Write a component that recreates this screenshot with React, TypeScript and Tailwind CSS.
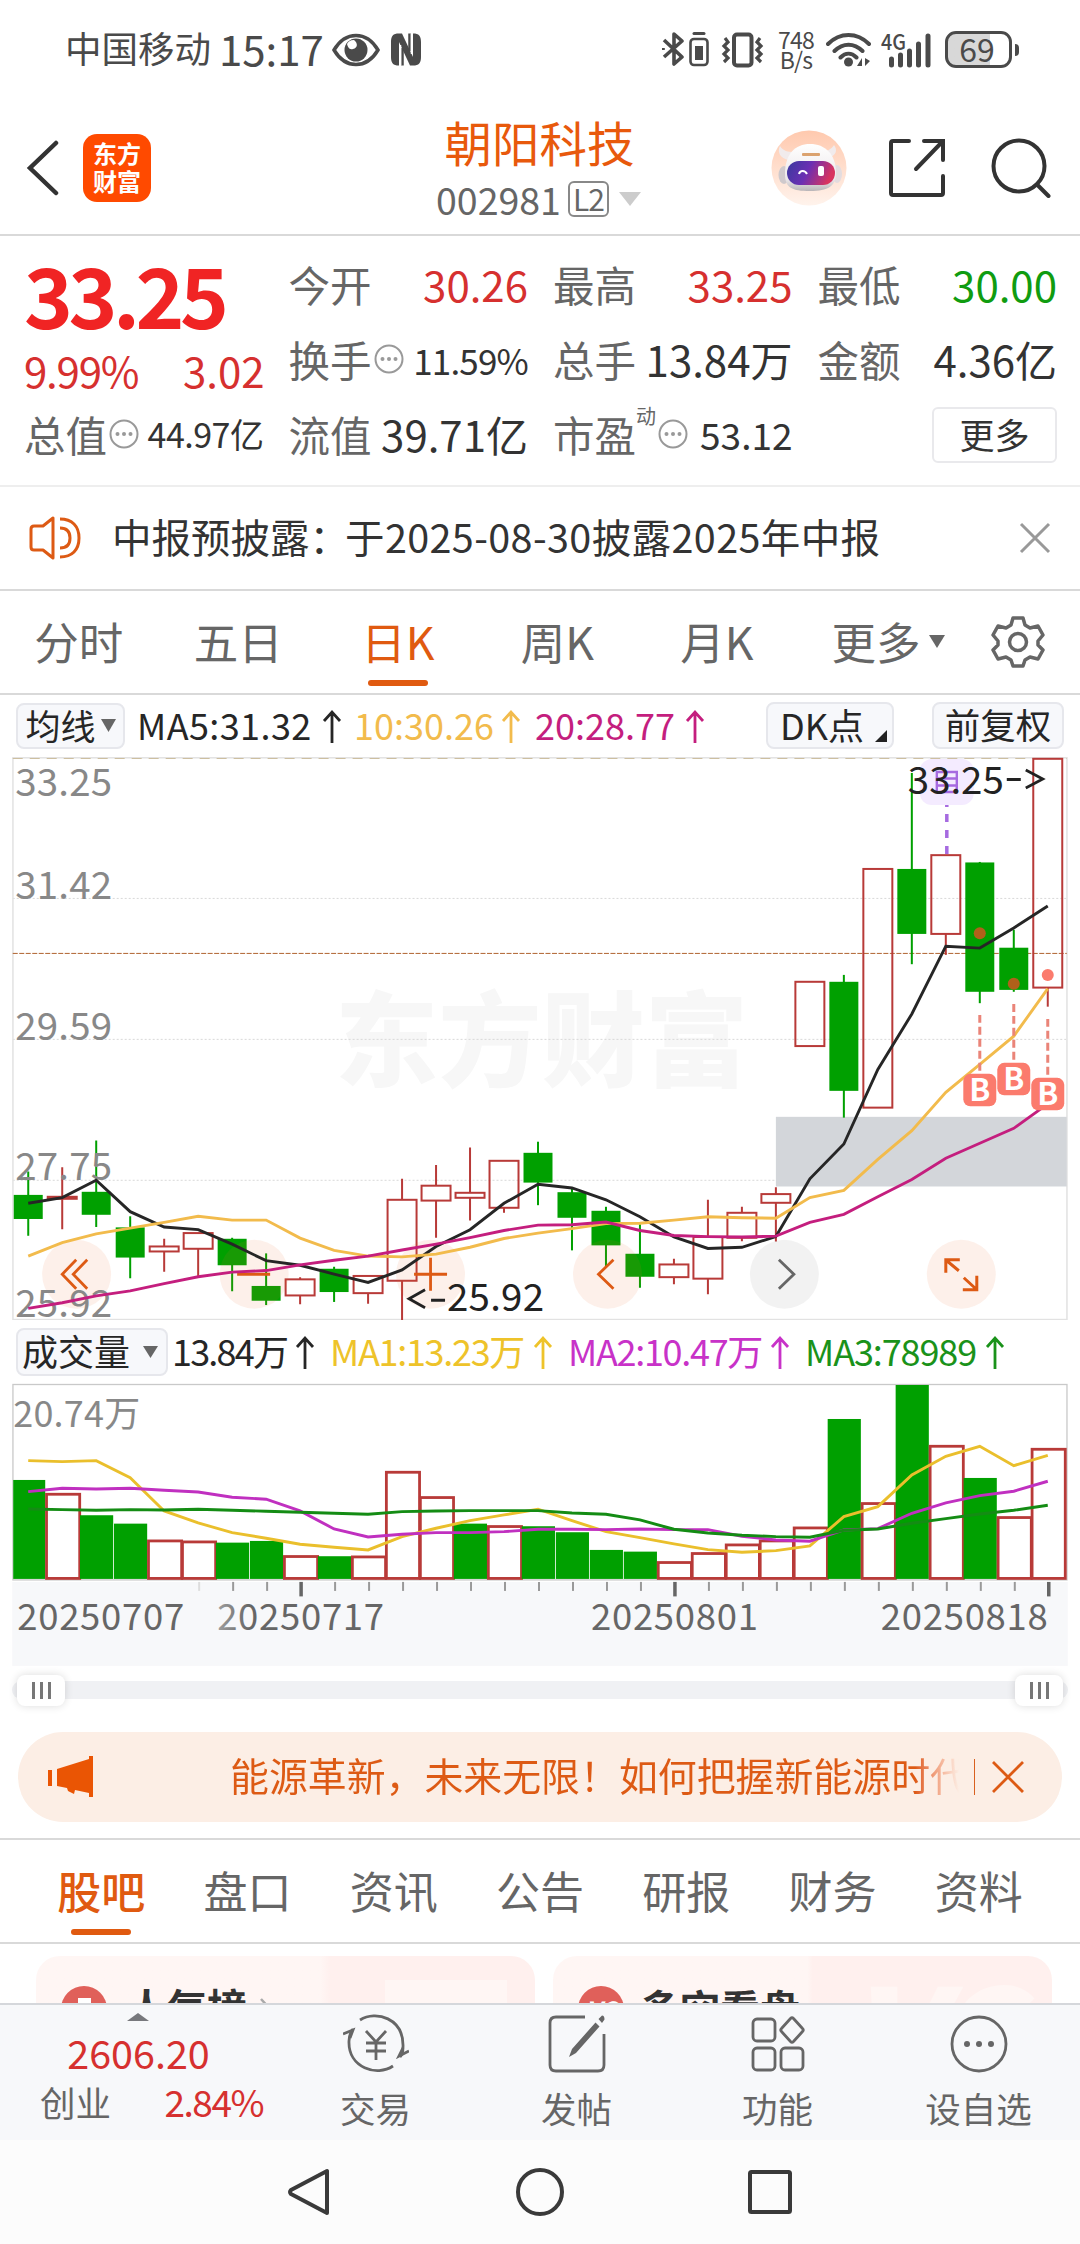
import { ReactNode } from "react";

type Candle = {
  up: boolean;
  high: number;
  top: number;
  bottom: number;
  low: number;
};

// [up, high, top, bottom, low] in chart pixels
const candleRows: [number, number, number, number, number][] = [
  [0, 1171.7, 1195.1, 1219.2, 1236],
  [1, 1167.5, 1197, 1199, 1229.5],
  [0, 1140.7, 1192, 1215, 1227.2],
  [0, 1216.5, 1227.6, 1257.8, 1278.5],
  [1, 1239, 1246.7, 1251.7, 1272],
  [1, 1233.3, 1233.3, 1249, 1276.2],
  [0, 1238, 1239, 1265.5, 1291.5],
  [0, 1253.6, 1286.2, 1301, 1305.3],
  [1, 1277.4, 1279.6, 1295.7, 1304.5],
  [0, 1267, 1269, 1292.3, 1302.2],
  [1, 1276.2, 1276.2, 1293.4, 1304],
  [1, 1179, 1200, 1281, 1320.6],
  [1, 1165.2, 1185.9, 1200.8, 1238],
  [1, 1147.6, 1193, 1198, 1220.7],
  [1, 1161, 1161, 1208, 1213],
  [0, 1141.9, 1153, 1182.8, 1205.4],
  [0, 1189, 1192.4, 1218, 1250.6],
  [0, 1207, 1211, 1245.6, 1266.6],
  [0, 1224.5, 1254, 1277, 1288],
  [1, 1259, 1264.7, 1277.4, 1284.6],
  [1, 1200, 1237.2, 1278.9, 1294.6],
  [1, 1207, 1213, 1238, 1241.4],
  [1, 1187.4, 1194.3, 1203, 1241.8],
  [1, 981.9, 981.9, 1046.2, 1046.2],
  [0, 975, 981.9, 1091, 1117.8],
  [1, 869, 869, 1107.8, 1107.8],
  [0, 773, 869, 934, 964.3],
  [1, 855.2, 855.2, 934, 955],
  [0, 862, 862.5, 991.9, 1003.3],
  [0, 929.9, 947.8, 990, 991.9],
  [1, 758.8, 758.8, 987.7, 1006.8],
];

const candles: Candle[] = candleRows.map(([up, high, top, bottom, low]) => ({
  up: up === 1,
  high,
  top,
  bottom,
  low,
}));

const ma5 = [
  1203.5, 1197.8, 1180.5, 1211.9, 1227.2, 1229.9, 1244.4, 1260.9, 1265.5, 1274.3, 1282.7, 1270.1, 1246.7, 1229.9,
  1203.5, 1184.4, 1188.2, 1200, 1216.9, 1237.2, 1248.7, 1247.5, 1236.8, 1179, 1144.2, 1069.6, 1014.1, 946.3, 948.2,
  928, 906.1,
];
const ma10 = [
  1256.3, 1242.9, 1234.1, 1228.4, 1222.6, 1216.5, 1220.3, 1220.3, 1238.3, 1250.6, 1256.3, 1257.1, 1254.4, 1247.5,
  1238.7, 1233.4, 1228.8, 1223.8, 1223.4, 1220.3, 1216.9, 1218, 1218.4, 1197.8, 1190.5, 1159.5, 1130.8, 1092.5,
  1064.6, 1036.3, 988.8,
];
const ma20 = [
  1308.7, 1303, 1296.1, 1291.1, 1283.9, 1277, 1272.4, 1270.8, 1265.1, 1260.5, 1256.3, 1250.2, 1244.4, 1237.9,
  1230.7, 1225.3, 1224.9, 1222.3, 1230.7, 1235.7, 1236.8, 1237.2, 1236.4, 1222.6, 1214.6, 1197, 1179.8, 1158.4,
  1143.4, 1128.5, 1104,
];

// [up, top]
const volumes: [number, number][] = [
  [0, 1480], [1, 1493], [0, 1515.3], [0, 1523.7], [1, 1539.7], [1, 1540.7], [0, 1542.7], [0, 1541],
  [1, 1555.3], [0, 1556.3], [1, 1555.7], [1, 1471], [1, 1496.3], [0, 1523.7], [1, 1525.3], [0, 1526.3],
  [0, 1532.3], [0, 1550], [0, 1551.7], [1, 1561.3], [1, 1552.3], [1, 1543.7], [1, 1539.7], [1, 1526.7],
  [0, 1419], [1, 1502.3], [0, 1385], [1, 1445], [0, 1478], [1, 1516.3], [1, 1448],
];
const vma1 = [
  1460.7, 1461.7, 1460.7, 1477.7, 1511, 1523, 1532.7, 1538.3, 1544.3, 1547.3, 1550, 1536.7, 1528.3, 1520.7, 1515,
  1509.3, 1520.7, 1531.7, 1537.7, 1544, 1549.7, 1552.3, 1550.7, 1546, 1516.7, 1506.7, 1475, 1456.3, 1446.3, 1465.7,
  1455.3,
];
const vma2 = [
  1491.7, 1488.3, 1489, 1488.3, 1490.3, 1492, 1497.3, 1499.3, 1511, 1529, 1537, 1534.3, 1532.7, 1532.7, 1531.7,
  1529.3, 1529.3, 1529.7, 1529, 1529.7, 1529.7, 1536.3, 1540, 1541.3, 1530, 1528.7, 1513.3, 1503, 1495.7, 1491.3,
  1481.3,
];
const vma3 = [
  1509, 1509.7, 1510.3, 1509.7, 1510, 1509.3, 1510.3, 1511.3, 1512.3, 1513.3, 1514.3, 1511.7, 1511, 1510.7, 1510.7,
  1510.7, 1513, 1514.3, 1520, 1529.3, 1533, 1535.3, 1536.7, 1537.3, 1530.3, 1529, 1523.3, 1518.7, 1514, 1510.3,
  1505.3,
];

const cx = (i: number) => 28 + i * 34;
const toPoints = (ys: number[]) => ys.map((y, i) => `${cx(i)},${y}`).join(" ");

function StatusBar() {
  return (
    <div className="flex h-[110px] items-center pb-[10px] pl-[65px] pr-[61px] text-[#4a4a4a]">
      <span className="-mt-[3px] text-[36.5px] leading-none">中国移动</span>
      <span className="-mt-[3px] ml-[8px] text-[42px] leading-none">15:17</span>
      <svg className="ml-[8px]" width="48" height="34" viewBox="0 0 48 34" fill="none">
        <path d="M2 17C8 7 15 2.500 24 2.500S40 7 46 17C40 27 33 31.500 24 31.500S8 27 2 17Z" stroke="currentColor" strokeWidth="3.500" />
        <circle cx="24" cy="17" r="11.500" fill="currentColor" />
        <path d="M22 7c4 3 4 8-1 9-4 1-5-2-6-5 1-2 3-4 7-4Z" fill="#fff" />
      </svg>
      <svg className="ml-[10px]" width="32" height="33" viewBox="0 0 32 33" fill="none">
        <path d="M9 0.500C3 0.500 1 3 1 9v15c0 6 2 8.500 8 8.500ZM23 32.500c6 0 8-2.500 8-8.500V9c0-6-2-8.500-8-8.500Z" fill="currentColor" />
        <path d="M9 0.500h3L23 24v8.500h-3L9 9Z" fill="currentColor" />
        <path d="M12.500 15v17.500M19.500 0.500V18" stroke="currentColor" strokeWidth="2.500" />
        <path d="M10.500 12v20M21.500 1v20" stroke="#fff" strokeWidth="1.500" />
      </svg>
      <div className="ml-auto flex items-center">
        <svg width="48" height="38" viewBox="0 0 48 38" fill="none" stroke="currentColor">
          <path d="M2 9l18 17-8 7V3l8 7L2 26M1 17v2" strokeWidth="3.600" strokeLinejoin="round" />
          <path d="M32 2.500h10" strokeWidth="3" strokeLinecap="round" />
          <rect x="28.500" y="8" width="17" height="26" rx="3.500" strokeWidth="2.600" />
          <rect x="33" y="15" width="8" height="14" fill="currentColor" stroke="none" />
        </svg>
        <svg className="ml-[11px]" width="44" height="38" viewBox="0 0 44 38" fill="none" stroke="currentColor">
          <rect x="13" y="3.500" width="17.500" height="31" rx="3" strokeWidth="4" />
          <path d="M4 7l3 4-4 4 4 4-4 4 4 4-4 4M39 7l-3 4 4 4-4 4 4 4-4 4 4 4" strokeWidth="3.200" />
        </svg>
        <div className="-mt-[2px] ml-[12px] flex w-[38px] flex-col items-center text-[23px] leading-[20px] tracking-[-0.8px]">
          <span>748</span>
          <span>B/s</span>
        </div>
        <svg className="ml-[11px]" width="46" height="38" viewBox="0 0 46 38" fill="none" stroke="currentColor" strokeWidth="4">
          <path d="M2 13C14 1 31 1 43 13M8.500 20C17 11.500 28 11.500 36.500 20M14.500 26.500c5-5 11-5 16 0" strokeLinecap="round" />
          <circle cx="22.500" cy="31" r="4.500" fill="currentColor" stroke="none" />
          <path d="M36 27v8h-5ZM39 27v8l5-5Z" fill="currentColor" stroke="none" />
        </svg>
        <svg className="ml-[9px]" width="52" height="38" viewBox="0 0 52 38" fill="none">
          <text x="0" y="19" fontSize="22" fontWeight="500" textLength="25" lengthAdjust="spacingAndGlyphs" fill="currentColor">4G</text>
          <path d="M10.500 28v6M19.500 24v10M28.500 20v14M37.500 13v21M47 5v29" stroke="currentColor" strokeWidth="5" strokeLinecap="round" />
        </svg>
        <div className="ml-[12px] flex h-[37px] w-[67px] items-center justify-center rounded-[11px] border-[3px] border-[#4a4a4a] bg-linear-to-r from-[#d8d8d8] from-69% to-white to-69% pb-[3px] pr-[3px] text-[32px] leading-[31px]">
          69
        </div>
        <div className="ml-[3px] h-3 w-1 rounded-r-sm bg-[#4a4a4a]" />
      </div>
    </div>
  );
}

function RobotIcon() {
  return (
    <svg width="76" height="76" viewBox="0 0 76 76">
      <defs>
        <linearGradient id="halo" x1="0" y1="0" x2="0" y2="1">
          <stop offset="0" stopColor="#ffc9ae" />
          <stop offset="1" stopColor="#fff3ec" />
        </linearGradient>
        <linearGradient id="visor" x1="0" y1="0" x2="1" y2="0.25">
          <stop offset="0" stopColor="#3a3a9e" />
          <stop offset="0.5" stopColor="#6b2fb3" />
          <stop offset="1" stopColor="#d8335f" />
        </linearGradient>
        <linearGradient id="shell" x1="0" y1="0" x2="0" y2="1">
          <stop offset="0" stopColor="#ffffff" />
          <stop offset="0.75" stopColor="#ece8ea" />
          <stop offset="1" stopColor="#b9b5b8" />
        </linearGradient>
      </defs>
      <circle cx="38" cy="38" r="37.500" fill="url(#halo)" />
      <path d="M17 30C9 28 6 22 9 16c3 5 8 6 14 6ZM57 28c8-2 10-8 6-13-3 5-7 6-12 6Z" fill="#f1ebec" />
      <ellipse cx="13" cy="45" rx="5.500" ry="9" fill="#cfc9cc" />
      <ellipse cx="66" cy="44" rx="5" ry="9" fill="#e3dcdf" />
      <path d="M14 44C14 24 24 14 39 14s26 10 26 29c0 13-8 18-26 18S14 58 14 44Z" fill="url(#shell)" />
      <rect x="16" y="31" width="48" height="24" rx="12" fill="url(#visor)" />
      <rect x="31" y="23" width="18" height="3" rx="1" fill="#dba26f" />
      <path d="M28 44c1-4 6-4 8 0" stroke="#fff" strokeWidth="2" fill="none" />
      <rect x="47" y="36" width="6" height="10" rx="2" fill="#fff" />
    </svg>
  );
}

function Header() {
  return (
    <header className="flex h-[126px] items-center border-b-2 border-[#d9d9d9] pl-[26px] pr-[29px] text-[#333]">
      <svg width="33" height="56" viewBox="0 0 33 56" fill="none" className="-mt-[8px]">
        <path d="M30 3L4 28l26 25" stroke="currentColor" strokeWidth="4.500" strokeLinecap="round" />
      </svg>
      <div className="-mt-[8px] ml-[24px] flex h-[68px] w-[68px] flex-col items-center justify-center rounded-[14px] bg-[#ff4a00] pb-[2px] text-[24px] font-bold leading-[28px] text-white">
        <span>东方</span>
        <span>财富</span>
      </div>
      <div className="-mt-[6px] flex flex-1 flex-col items-center pl-[157px]">
        <h1 className="whitespace-nowrap text-[47.5px] font-normal leading-[56px] text-[#e8590c]">朝阳科技</h1>
        <div className="mt-1 flex items-center pr-[2px] text-[#666]">
          <span className="text-[37.5px] leading-[50px]">002981</span>
          <span className="ml-[7px] flex h-9 w-[41px] items-center justify-center rounded-md border-2 border-[#888] pb-[2px] text-[30px] leading-none tracking-[-1px]">
            L2
          </span>
          <svg className="ml-[10px]" width="22" height="14" viewBox="0 0 22 14">
            <path d="M0 0h22L11 14Z" fill="#ccc" />
          </svg>
        </div>
      </div>
      <div className="-mt-[8px] flex items-center">
        <RobotIcon />
        <svg className="ml-[41px]" width="58" height="60" viewBox="0 0 58 60" fill="none" stroke="currentColor" strokeWidth="4" strokeLinecap="round">
          <path d="M21 3H5c-1.500 0-2 .5-2 2v50c0 1.500.5 2 2 2h48c1.500 0 2-.5 2-2V38M36 3h19v19M55 3L28 31" />
        </svg>
        <svg className="ml-[45px]" width="60" height="60" viewBox="0 0 60 60" fill="none" stroke="currentColor" strokeWidth="4" strokeLinecap="round">
          <circle cx="28" cy="28" r="25.500" />
          <path d="M46.500 47l11 11" />
        </svg>
      </div>
    </header>
  );
}

function Dots() {
  return (
    <svg className="ml-[2px]" width="30" height="30" viewBox="0 0 30 30" fill="#999">
      <circle cx="15" cy="15" r="13.500" fill="none" stroke="#999" strokeWidth="2" />
      <circle cx="8.500" cy="15" r="2" />
      <circle cx="15" cy="15" r="2" />
      <circle cx="21.500" cy="15" r="2" />
    </svg>
  );
}

function Stat({ label, children }: { label: ReactNode; children?: ReactNode }) {
  return (
    <div className="flex h-[75px] items-center justify-between text-[42px] leading-none text-[#333]">
      <span className="flex items-center text-[41.5px] text-[#666]">{label}</span>
      {children}
    </div>
  );
}

function Quote() {
  return (
    <section className="grid h-[251px] grid-cols-4 gap-x-[25px] border-b-2 border-[#eee] pl-[24px] pr-[23px] pt-[11px]">
      <div className="flex flex-col">
        <div className="flex h-[96px] items-center pb-[3px] text-[83px] font-bold leading-none tracking-[-4.500px] text-[#f02424]">33.25</div>
        <div className="flex h-[54px] items-center justify-between text-[42px] leading-none text-[#d6302f]">
          <span className="tracking-[-1.200px]">9.99%</span>
          <span className="-mr-[1px]">3.02</span>
        </div>
        <Stat label={<>总值<Dots /></>}>
          <span className="text-[34px] tracking-[-0.5px]">44.97亿</span>
        </Stat>
      </div>
      <div>
        <Stat label="今开">
          <span className="text-[#d6302f]">30.26</span>
        </Stat>
        <Stat label={<>换手<Dots /></>}>
          <span className="text-[35px] tracking-[-0.8px]">11.59%</span>
        </Stat>
        <Stat label="流值">
          <span>39.71亿</span>
        </Stat>
      </div>
      <div>
        <Stat label="最高">
          <span className="text-[#d6302f]">33.25</span>
        </Stat>
        <Stat label="总手">
          <span>13.84万</span>
        </Stat>
        <Stat
          label={
            <>
              市盈<sup className="-top-[18px] text-[20px] leading-none">动</sup>
              <Dots />
            </>
          }
        >
          <span className="text-[37px]">53.12</span>
        </Stat>
      </div>
      <div>
        <Stat label="最低">
          <span className="text-[#109c10]">30.00</span>
        </Stat>
        <Stat label="金额">
          <span>4.36亿</span>
        </Stat>
        <div className="flex h-[75px] items-center justify-end pt-[2px]">
          <button className="h-[56px] w-[125px] rounded-md border-2 border-[#e9e9ec] pb-[4px] text-[35px] leading-none text-[#333]">更多</button>
        </div>
      </div>
    </section>
  );
}

function Notice() {
  return (
    <section className="flex h-[104px] items-center border-b-2 border-[#d9d9d9] pl-[29px] pr-[29px]">
      <svg width="52" height="46" viewBox="0 0 52 46" fill="none" stroke="#dd5a14" strokeWidth="3">
        <path d="M24 3v40L14 35H5c-2 0-3-1-3-3V14c0-2 1-3 3-3h9Z" strokeLinejoin="round" />
        <path d="M31 13c7 0 10 4 10 10s-3 10-10 10M31 4c12 0 19 7 19 19s-7 19-19 19" />
      </svg>
      <p className="-mt-[5px] ml-[31px] text-[39.5px] leading-none text-[#333]">
        中报预披露：<span className="-ml-[4px] tracking-[0.4px]">于2025-08-30披露2025年中报</span>
      </p>
      <svg className="ml-auto" width="32" height="32" viewBox="0 0 32 32" stroke="#999" strokeWidth="3">
        <path d="M2 2l28 28M30 2L2 30" />
      </svg>
    </section>
  );
}

function PeriodTabs() {
  const tabs = ["分时", "五日", "日K", "周K", "月K"];
  return (
    <nav className="flex h-[104px] items-center border-b-2 border-[#d9d9d9] pr-[35px] text-[44.5px] leading-none text-[#666]">
      {tabs.map((tab) => (
        <div
          key={tab}
          className={
            tab === "日K"
              ? "relative flex h-full w-[159.500px] items-center justify-center pr-[2px] text-[#e05a10]"
              : "flex w-[159.500px] items-center justify-center pr-[2px]"
          }
        >
          {tab}
          {tab === "日K" && <span className="absolute bottom-[7px] h-[6px] w-[60px] rounded-full bg-[#e05a10]" />}
        </div>
      ))}
      <span className="ml-[34px]">更多</span>
      <svg className="ml-[8px]" width="16" height="13" viewBox="0 0 16 13">
        <path d="M0 0h16L8 13Z" fill="#666" />
      </svg>
      <svg className="ml-auto" width="54" height="54" viewBox="0 0 54 54" fill="none" stroke="#666" strokeWidth="3.500" strokeLinejoin="round">
        <path d="M22 3h10l2 7 5 3 8-2 5 9-5 6v4l5 5-5 9-8-2-5 3-2 6H22l-2-6-5-3-8 2-5-9 5-5v-4l-5-6 5-9 8 2 5-3Z" />
        <circle cx="27" cy="27" r="8.500" />
      </svg>
    </nav>
  );
}

function UpArrow({ className }: { className?: string }) {
  return (
    <svg className={className} width="20" height="34" viewBox="0 0 20 34" fill="none" stroke="currentColor" strokeWidth="2.800">
      <path d="M10 34V3M2 12l8-9 8 9" />
    </svg>
  );
}

function PriceHeader() {
  return (
    <div className="flex h-[62px] items-center px-4 text-[36px] leading-none text-[#262626]">
      <button className="flex h-[46px] w-[109px] items-center justify-center rounded-lg border-2 border-[#e6e7ec] bg-[#f7f8fb] leading-none">
        <span className="pb-[3px] text-[35px]">均线</span>
        <svg className="ml-[5px]" width="15" height="13" viewBox="0 0 15 13">
          <path d="M0 0h15L7.500 13Z" fill="#666" />
        </svg>
      </button>
      <span className="ml-[12px] w-[185px] pb-[4px] tracking-[0.4px]">MA5:31.32</span>
      <UpArrow />
      <span className="ml-[12px] flex items-center text-[#f2bb4c]">
        <span className="w-[147px] pb-[4px]">10:30.26</span>
        <UpArrow />
      </span>
      <span className="ml-[14px] flex items-center text-[#c41e7e]">
        <span className="w-[150px] pb-[4px]">20:28.77</span>
        <UpArrow />
      </span>
      <button className="relative ml-auto h-[47px] w-[128px] rounded-lg border-2 border-[#e6e7ec] bg-[#f7f8fb] pb-[4px] pr-[16px] leading-none">
        DK点
        <svg className="absolute bottom-[5px] right-[5px]" width="12" height="12" viewBox="0 0 12 12">
          <path d="M12 0v12H0Z" fill="#222" />
        </svg>
      </button>
      <button className="ml-[38px] h-[47px] w-[132px] rounded-lg border-2 border-[#e6e7ec] bg-[#f7f8fb] pb-[4px] text-[35.5px] leading-none">前复权</button>
    </div>
  );
}

function PriceChart() {
  const controls = [76.4, 254, 430.5, 607.5, 784.5, 961.5];
  const badges = [
    { i: 28, line: 1015, y: 1074 },
    { i: 29, line: 1004, y: 1063 },
    { i: 30, line: 1019, y: 1078 },
  ];
  return (
    <svg className="block" width="1080" height="564" viewBox="0 757 1080 564" fill="none">
      <text x="335" y="1079" fontSize="103" fontWeight="900" textLength="413" fill="#f7f7f7">东方财富</text>
      <path d="M12.500 898.500H1067M12.500 1039.500H1067M12.500 1180.500H1067" stroke="#d8d8d8" strokeDasharray="2 2" />
      <rect x="12.700" y="757.800" width="1054.500" height="562" stroke="#e2e2e2" strokeWidth="1.500" />
      <path d="M12.500 758.500H1067" stroke="#cdbf9f" strokeDasharray="10 7" />
      <path d="M12.500 953.500H1067" stroke="#b0622f" strokeDasharray="5 1.500" />
      <rect x="776" y="1117" width="291" height="69.700" fill="#d3d6da" />

      {candles.map((c, i) =>
        c.up ? (
          <g key={i} stroke="#b83a38" strokeWidth="2">
            <path d={`M${cx(i)} ${c.high}V${c.top}M${cx(i)} ${c.bottom}V${c.low}`} />
            <rect x={cx(i) - 14.5} y={c.top} width="29" height={c.bottom - c.top} />
          </g>
        ) : (
          <g key={i} fill="#00a000">
            <rect x={cx(i) - 1} y={c.high} width="2" height={c.low - c.high} />
            <rect x={cx(i) - 14.5} y={c.top} width="29" height={c.bottom - c.top} />
          </g>
        )
      )}

      {controls.map((x, i) => (
        <circle key={x} cx={x} cy="1274.500" r="34.500" fill={i === 4 ? "#000000" : "#f07030"} fillOpacity={i === 4 ? 0.05 : 0.1} />
      ))}

      <g fontSize="38.500" fill="#888">
        <text x="15" y="796" textLength="97">33.25</text>
        <text x="15" y="899" textLength="97">31.42</text>
        <text x="15" y="1040" textLength="97">29.59</text>
        <text x="15" y="1180" textLength="97">27.75</text>
        <text x="15" y="1317" textLength="97">25.92</text>
      </g>

      <path d="M76 1260l-14 14.500 14 14.500M87 1260l-14 14.500 14 14.500" stroke="#dd5a14" strokeWidth="2.800" />
      <path d="M237 1274.500h33M414 1274.500h33M430.500 1258v33" stroke="#dd5a14" strokeWidth="2.800" />
      <path d="M613.500 1260l-15 14.500 15 14.500" stroke="#dd5a14" strokeWidth="2.800" />
      <path d="M779 1260l15 14.500-15 14.500" stroke="#666" strokeWidth="2.800" />
      <path d="M946 1273v-13h14M947 1261l12 10M977 1276v14h-14M976 1289l-12-11" stroke="#dd5a14" strokeWidth="3" />

      <polyline points={toPoints(ma5)} stroke="#262626" strokeWidth="2.900" />
      <polyline points={toPoints(ma10)} stroke="#f2bb4c" strokeWidth="2.900" />
      <polyline points={toPoints(ma20)} stroke="#c41e7e" strokeWidth="2.900" />

      <rect x="920" y="759" width="54" height="46" rx="12" fill="#f4ebff" />
      <path d="M937 772h20v20h-20zM937 778.500h20M937 785.500h20" stroke="#a66ae0" strokeWidth="2.400" />
      <path d="M947 805v2M947 814v8M947 830v8M947 846v8" stroke="#a66ae0" strokeWidth="3.500" />

      <g fontSize="38.500" fill="#222">
        <text x="908" y="794" textLength="96">33.25</text>
        <text x="447" y="1311" textLength="97">25.92</text>
      </g>
      <path d="M1007 779.500h14M1026 770l17 9-17 9M425 1290l-16 9 16 9M431 1300.500h14" stroke="#222" strokeWidth="2.800" />

      {badges.map((b) => (
        <g key={b.i}>
          <path d={`M${cx(b.i)} ${b.line}V${b.y - 3}`} stroke="#ea8478" strokeWidth="3" strokeDasharray="8 4" />
          <rect x={cx(b.i) - 16.5} y={b.y} width="33" height="32.500" rx="7" fill="#fb7b6d" />
          <text x={cx(b.i)} y={b.y + 27} fontSize="31" fontWeight="700" textAnchor="middle" fill="#fff">B</text>
        </g>
      ))}
      <circle cx="980" cy="933.300" r="6" fill="#b0601a" />
      <circle cx="1014" cy="983.800" r="6" fill="#b0601a" />
      <circle cx="1048" cy="975" r="6" fill="#fb7b6d" />
    </svg>
  );
}

function VolumeHeader() {
  return (
    <div className="flex h-[63px] items-center pl-[16px] text-[36px] leading-none">
      <button className="flex h-[48px] w-[152px] items-center rounded-lg border-2 border-[#e6e7ec] bg-[#f7f8fb] pl-1 leading-none text-[#262626]">
        <span className="pb-[3px]">成交量</span>
        <svg className="ml-[13px]" width="15" height="12" viewBox="0 0 15 12">
          <path d="M0 0h15L7.500 12Z" fill="#666" />
        </svg>
      </button>
      <span className="ml-[4px] w-[123px] pb-[3px] tracking-[-1.800px] text-[#262626]">13.84万</span>
      <UpArrow className="text-[#262626]" />
      <span className="ml-[15px] flex items-center text-[#eec32a]">
        <span className="w-[203px] pb-[3px] tracking-[-1.300px]">MA1:13.23万</span>
        <UpArrow />
      </span>
      <span className="ml-[15px] flex items-center text-[#c832c8]">
        <span className="w-[202px] pb-[3px] tracking-[-1.300px]">MA2:10.47万</span>
        <UpArrow />
      </span>
      <span className="ml-[15px] flex items-center text-[#1a921a]">
        <span className="w-[180px] pb-[3px] tracking-[-1.100px]">MA3:78989</span>
        <UpArrow />
      </span>
    </div>
  );
}

function VolumeChart() {
  const ticks = Array.from({ length: 26 }, (_, k) => k + 5);
  return (
    <svg className="block" width="1080" height="284" viewBox="0 1383 1080 284" fill="none">
      <rect x="12" y="1582" width="1056" height="84" fill="#f7f8fa" />
      <rect x="12.700" y="1384.500" width="1054.500" height="195.500" stroke="#c9c9c9" strokeWidth="1.300" />
      <text x="13" y="1427" fontSize="36" textLength="127" fill="#888">20.74万</text>
      {volumes.map(([up, top], i) =>
        up ? (
          <rect key={i} x={cx(i) - 15.7} y={top + 1.3} width="33.200" height={1577.2 - top} stroke="#b83a38" strokeWidth="2.800" />
        ) : (
          <rect key={i} x={Math.max(cx(i) - 16.2, 13)} y={top} width={i === 0 ? 32 : 33.2} height={1579 - top} fill="#00a000" />
        )
      )}
      <polyline points={toPoints(vma1)} stroke="#eabf2c" strokeWidth="2.900" />
      <polyline points={toPoints(vma2)} stroke="#c030c0" strokeWidth="2.900" />
      <polyline points={toPoints(vma3)} stroke="#148c14" strokeWidth="2.900" />
      {ticks.map((i) => {
        const major = i === 8 || i === 19 || i === 30;
        return (
          <path
            key={i}
            d={`M${cx(i) + 1} 1582V${major ? 1596.5 : 1591}`}
            stroke={major ? "#666" : i === 5 ? "#ddd" : "#999"}
            strokeWidth={major ? 3.5 : 2}
          />
        );
      })}
      <defs>
        <linearGradient id="dateFade" gradientUnits="userSpaceOnUse" x1="210" y1="0" x2="250" y2="0">
          <stop offset="0" stopColor="#aaa" />
          <stop offset="1" stopColor="#666" />
        </linearGradient>
      </defs>
      <g fontSize="36.500" fill="#666">
        <text x="17" y="1630" textLength="167">20250707</text>
        <text x="217" y="1630" textLength="167" fill="url(#dateFade)">20250717</text>
        <text x="591" y="1630" textLength="167">20250801</text>
        <text x="881" y="1630" textLength="167">20250818</text>
      </g>
    </svg>
  );
}

function Handle() {
  return (
    <div className="flex h-[31px] w-[48px] items-center justify-center gap-[5px] rounded-lg bg-white shadow-[0_0_8px_rgba(0,0,0,0.14)]">
      <span className="h-[17px] w-[3px] bg-[#777]" />
      <span className="h-[17px] w-[3px] bg-[#777]" />
      <span className="h-[17px] w-[3px] bg-[#777]" />
    </div>
  );
}

function RangeSlider() {
  return (
    <div className="flex h-[46px] items-center px-[12px]">
      <div className="flex h-[18px] w-full items-center justify-between rounded-full bg-[#f0f1f4] px-[5px]">
        <Handle />
        <Handle />
      </div>
    </div>
  );
}

function Banner() {
  return (
    <div className="mx-[18px] mt-[19px] flex h-[90px] items-center rounded-full bg-[#fceee5] pl-[30px] pr-[37px]">
      <svg width="46" height="42" viewBox="0 0 46 42" fill="#ea5504">
        <path d="M0 14h4v16H0zM9 13L41 3V0h4v41h-4v-4l-14-3-1 4-6-3-1-3-10-2Z" />
      </svg>
      <p className="-mt-[6px] ml-[136px] w-[729px] overflow-hidden whitespace-nowrap bg-linear-to-r from-[#dd5a14] from-94% to-[#fceee5] to-100% bg-clip-text text-[38.900px] leading-[50px] text-transparent">
        能源革新，未来无限！如何把握新能源时代
      </p>
      <span className="ml-auto h-9 w-[1.500px] bg-[#d9601f]" />
      <svg className="ml-[16px]" width="34" height="34" viewBox="0 0 34 34" stroke="#dd5a14" strokeWidth="2.800">
        <path d="M2 2l30 30M32 2L2 32" />
      </svg>
    </div>
  );
}

function SectionTabs() {
  const tabs = ["股吧", "盘口", "资讯", "公告", "研报", "财务", "资料"];
  return (
    <nav className="mt-[16px] flex h-[106px] border-y-2 border-[#d9d9d9] px-[28px] text-[44px] leading-none text-[#666]">
      {tabs.map((tab, i) => (
        <div
          key={tab}
          className={
            i === 0
              ? "relative flex flex-1 items-center justify-center pb-[3px] font-medium text-[#e05a10]"
              : "flex flex-1 items-center justify-center pb-[3px]"
          }
        >
          {tab}
          {i === 0 && <span className="absolute bottom-[7px] h-[6px] w-[60px] rounded-full bg-[#e05a10]" />}
        </div>
      ))}
    </nav>
  );
}

function Cards() {
  return (
    <div className="flex h-[59px] gap-[18px] overflow-hidden pl-[36px] pr-[28px] pt-[12px]">
      <div className="flex h-[120px] w-[499px] items-start rounded-[24px] bg-linear-to-r from-[#fff6f4] from-57% to-[#fff0ee] to-59% pl-[25px] pt-[30px]">
        <div className="flex h-[46px] w-[46px] justify-center rounded-full bg-[#e0605a] pt-[12px]">
          <span className="h-8 w-[13px] bg-white" />
        </div>
        <span className="-mt-[2px] ml-[20px] text-[40px] font-bold leading-[44px] text-[#333]">人气榜</span>
        <svg className="ml-[12px] mt-[12px]" width="14" height="24" viewBox="0 0 14 24" fill="none">
          <path d="M2 1l10 11L2 23" stroke="#aaa" strokeWidth="2.500" />
        </svg>
        <span className="-mt-[6px] ml-[112px] h-[90px] w-[122px] bg-[#fff6f4]" />
      </div>
      <div className="flex h-[120px] w-[499px] items-start overflow-hidden rounded-[24px] bg-linear-to-r from-[#fff6f4] from-51% to-[#fff0ee] to-52% pl-[25px] pt-[30px]">
        <div className="h-[46px] w-[46px] rounded-full bg-[#e0605a] pt-[8px] text-center text-[25px] font-bold italic leading-[30px] text-white">
          VS
        </div>
        <span className="-mt-[1px] ml-[16px] text-[40px] font-bold leading-[44px] text-[#333]">多空看盘</span>
        <span className="-mt-[26px] ml-[46px] text-[140px] font-black italic leading-[140px] tracking-[-4px] text-[#fff6f4]">VS</span>
      </div>
    </div>
  );
}

function BottomItem({ label, children }: { label: string; children: ReactNode }) {
  return (
    <div className="flex w-[201px] flex-col items-center pt-[8px] text-[#666]">
      <svg width="66" height="62" viewBox="0 0 66 62" fill="none" stroke="currentColor" strokeWidth="2.800">
        {children}
      </svg>
      <span className="mt-[15px] text-[35.500px] leading-[36px]">{label}</span>
    </div>
  );
}

function BottomBar() {
  return (
    <footer className="flex h-[137px] border-t-2 border-[#d5d7db] bg-[#f7f8fa] leading-none">
      <div className="flex w-[275px] flex-col items-center pt-[8px] text-[#d6302f]">
        <svg width="22" height="8" viewBox="0 0 22 8">
          <path d="M11 0l11 8H0Z" fill="#77787c" />
        </svg>
        <span className="ml-[2px] mt-[11px] text-[39.500px] leading-[40px]">2606.20</span>
        <div className="mt-[11px] flex w-full items-center justify-between pl-[40px] pr-[12px]">
          <span className="text-[35.500px] text-[#666]">创业</span>
          <span className="text-[37px] tracking-[-1.500px]">2.84%</span>
        </div>
      </div>
      <BottomItem label="交易">
        <path d="M17 7C33-3 61 5 60 34c0 4-1 8-3 10M50 53C34 64 5 55 6 28c0-5 1-8 4-12" />
        <path d="M0 21l10-4-3 8M66 38l-10 5 4-8" />
        <path d="M23 18l10 11 10-11M33 29v18M23 30h20M23 38h20" />
      </BottomItem>
      <BottomItem label="发帖">
        <path d="M41 4H12q-6 0-6 6v42q0 6 6 6h42q6 0 6-6V21" />
        <path d="M51.500 9.500l4 4L32 40l-7 4 3-8ZM54.500 6l3.500-3.500q2.500 0 2.500 4L58 10Z" fill="currentColor" stroke="none" />
      </BottomItem>
      <BottomItem label="功能">
        <rect x="8" y="6" width="22" height="22" rx="4" />
        <rect x="8" y="35" width="22" height="22" rx="4" />
        <rect x="36" y="35" width="22" height="22" rx="4" />
        <path d="M45.500 5.500q1.500-1.500 3 0l9 10q1.500 1.500 0 3l-9 10q-1.500 1.500-3 0l-9-10q-1.500-1.500 0-3Z" />
      </BottomItem>
      <BottomItem label="设自选">
        <circle cx="33" cy="31" r="27" />
        <g fill="currentColor" stroke="none">
          <circle cx="21" cy="31" r="3" />
          <circle cx="33" cy="31" r="3" />
          <circle cx="45" cy="31" r="3" />
        </g>
      </BottomItem>
    </footer>
  );
}

function SystemNav() {
  return (
    <div className="flex h-[104px] items-center justify-between bg-[#fcfcfc] pl-[286px] pr-[287px] text-[#3a3a3a]">
      <svg width="46" height="52" viewBox="0 0 46 52" fill="none" stroke="currentColor" strokeWidth="4" strokeLinejoin="round">
        <path d="M41 5v42L5 28q-2-2 0-4Z" />
      </svg>
      <svg width="50" height="50" viewBox="0 0 50 50" fill="none" stroke="currentColor" strokeWidth="4">
        <circle cx="25" cy="25" r="22" />
      </svg>
      <svg width="46" height="46" viewBox="0 0 46 46" fill="none" stroke="currentColor" strokeWidth="4">
        <rect x="3" y="3" width="40" height="40" rx="1.500" />
      </svg>
    </div>
  );
}

export default function App() {
  return (
    <div className="flex h-[2244px] w-[1080px] flex-col overflow-hidden bg-white font-['Noto_Sans_CJK_SC',sans-serif]">
      <StatusBar />
      <Header />
      <Quote />
      <Notice />
      <PeriodTabs />
      <PriceHeader />
      <PriceChart />
      <VolumeHeader />
      <VolumeChart />
      <RangeSlider />
      <Banner />
      <SectionTabs />
      <Cards />
      <BottomBar />
      <SystemNav />
    </div>
  );
}
